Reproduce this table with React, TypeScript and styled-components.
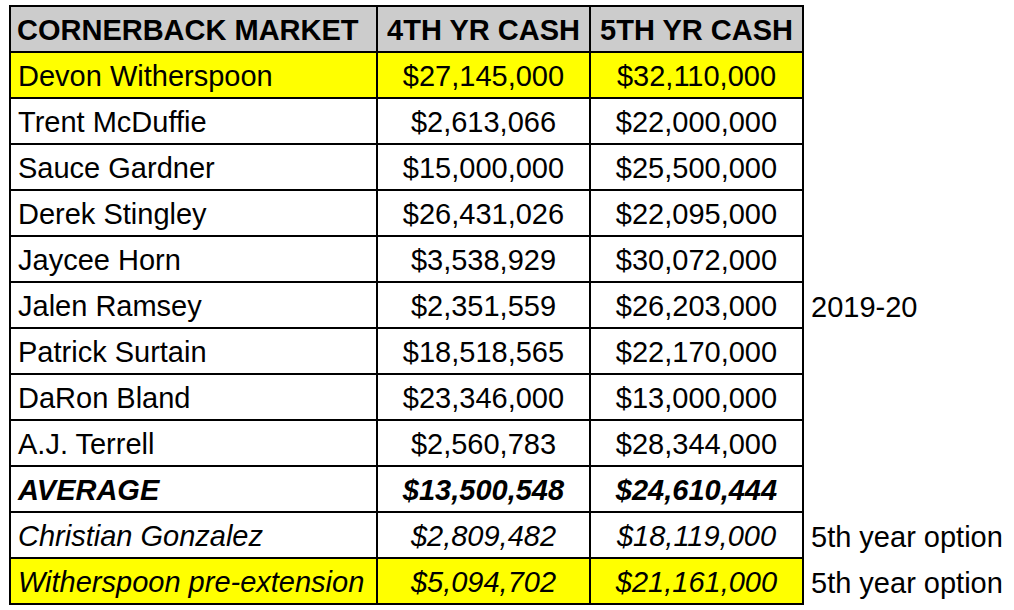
import React from 'react';
import styled, { createGlobalStyle } from 'styled-components';

const GlobalStyle = createGlobalStyle`
  html, body {
    margin: 0;
    padding: 0;
    background: #ffffff;
  }
  body {
    font-family: 'Liberation Sans', Arial, Helvetica, sans-serif;
    color: #000000;
  }
`;

const Sheet = styled.table`
  margin: 5px 0 0 9px;
  border-collapse: separate;
  border-spacing: 0;
  table-layout: fixed;
  width: 1005px;
`;

type CellProps = {
  $first?: boolean;
  $top?: boolean;
  $fill?: 'header' | 'yellow' | 'none';
  $bold?: boolean;
  $italic?: boolean;
};

const fills = {
  header: '#cccccc',
  yellow: '#ffff00',
  none: 'transparent',
};

const Cell = styled.td<CellProps>`
  box-sizing: border-box;
  height: ${(p) => (p.$top ? 48 : 46)}px;
  padding: 2px 7px 0;
  border-right: 2px solid #000;
  border-bottom: 2px solid #000;
  border-left: ${(p) => (p.$first ? '2px solid #000' : 'none')};
  border-top: ${(p) => (p.$top ? '2px solid #000' : 'none')};
  background: ${(p) => fills[p.$fill || 'none']};
  font-size: 29px;
  font-weight: ${(p) => (p.$bold ? 700 : 400)};
  font-style: ${(p) => (p.$italic ? 'italic' : 'normal')};
  vertical-align: middle;
  white-space: nowrap;
  overflow: hidden;
`;

const NameCell = styled(Cell)`
  text-align: left;
`;

const MoneyCell = styled(Cell)`
  text-align: center;
`;

const HeadCell = styled(Cell)`
  text-align: left;
  padding: 2px 6px 0;
`;

const HeadMoney = styled(HeadCell)`
  text-align: center;
`;

const NoteCell = styled.td`
  box-sizing: border-box;
  height: 46px;
  padding: 2px 7px 0;
  font-size: 29px;
  vertical-align: middle;
  white-space: nowrap;
`;

type Row = {
  name: string;
  fourth: string;
  fifth: string;
  note?: string;
  yellow?: boolean;
  bold?: boolean;
  italic?: boolean;
};

const rows: Row[] = [
  { name: 'Devon Witherspoon', fourth: '$27,145,000', fifth: '$32,110,000', yellow: true },
  { name: 'Trent McDuffie', fourth: '$2,613,066', fifth: '$22,000,000' },
  { name: 'Sauce Gardner', fourth: '$15,000,000', fifth: '$25,500,000' },
  { name: 'Derek Stingley', fourth: '$26,431,026', fifth: '$22,095,000' },
  { name: 'Jaycee Horn', fourth: '$3,538,929', fifth: '$30,072,000' },
  { name: 'Jalen Ramsey', fourth: '$2,351,559', fifth: '$26,203,000', note: '2019-20' },
  { name: 'Patrick Surtain', fourth: '$18,518,565', fifth: '$22,170,000' },
  { name: 'DaRon Bland', fourth: '$23,346,000', fifth: '$13,000,000' },
  { name: 'A.J. Terrell', fourth: '$2,560,783', fifth: '$28,344,000' },
  { name: 'AVERAGE', fourth: '$13,500,548', fifth: '$24,610,444', bold: true, italic: true },
  { name: 'Christian Gonzalez', fourth: '$2,809,482', fifth: '$18,119,000', note: '5th year option', italic: true },
  { name: 'Witherspoon pre-extension', fourth: '$5,094,702', fifth: '$21,161,000', note: '5th year option', yellow: true, italic: true },
];

const App: React.FC = () => {
  return (
    <>
      <GlobalStyle />
      <Sheet>
        <colgroup>
          <col style={{ width: 369 }} />
          <col style={{ width: 213 }} />
          <col style={{ width: 213 }} />
          <col style={{ width: 210 }} />
        </colgroup>
        <tbody>
          <tr>
            <HeadCell $first $top $fill="header" $bold>CORNERBACK MARKET</HeadCell>
            <HeadMoney $top $fill="header" $bold>4TH YR CASH</HeadMoney>
            <HeadMoney $top $fill="header" $bold>5TH YR CASH</HeadMoney>
            <NoteCell />
          </tr>
          {rows.map((r) => {
            const fill = r.yellow ? 'yellow' : 'none';
            return (
              <tr key={r.name}>
                <NameCell $first $fill={fill} $bold={r.bold} $italic={r.italic}>{r.name}</NameCell>
                <MoneyCell $fill={fill} $bold={r.bold} $italic={r.italic}>{r.fourth}</MoneyCell>
                <MoneyCell $fill={fill} $bold={r.bold} $italic={r.italic}>{r.fifth}</MoneyCell>
                <NoteCell>{r.note}</NoteCell>
              </tr>
            );
          })}
        </tbody>
      </Sheet>
    </>
  );
};

export default App;
